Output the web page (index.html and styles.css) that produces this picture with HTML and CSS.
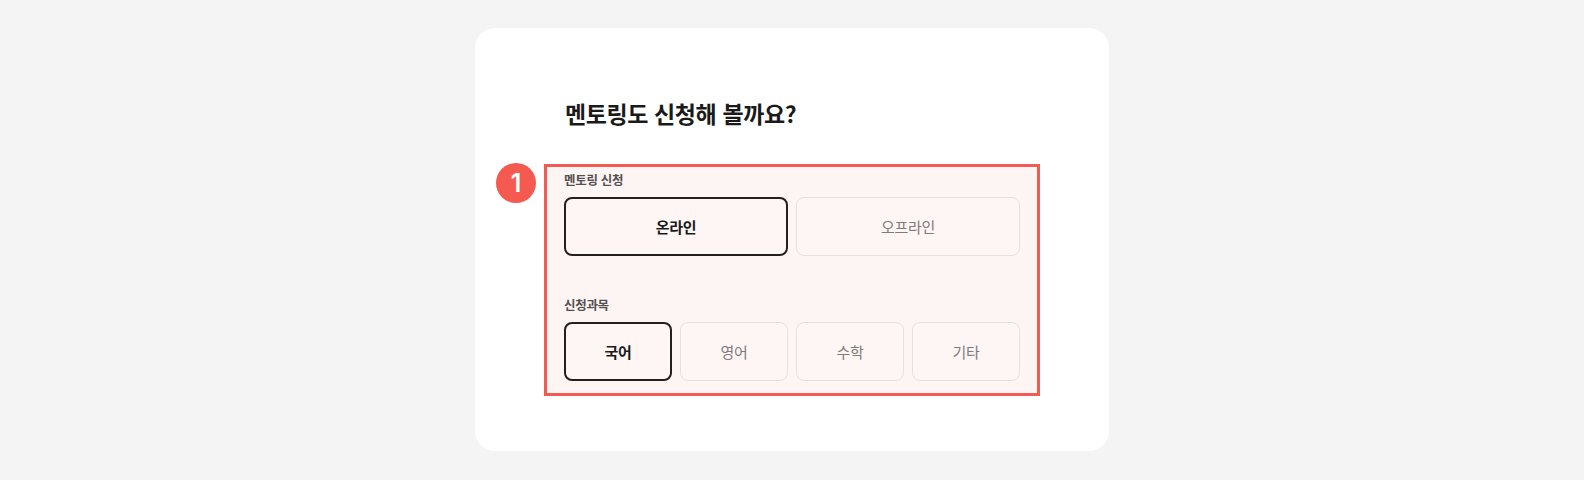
FILE: index.html
```html
<!DOCTYPE html>
<html lang="ko">
<head>
<meta charset="utf-8">
<link rel="stylesheet" href="styles.css">
</head>
<body>
<div class="card">
  <h1 class="title">멘토링도 신청해 볼까요?</h1>
  <div class="annot">
    <span class="badge">1</span>
    <div class="field">
      <div class="label">멘토링 신청</div>
      <div class="row">
        <button class="opt selected">온라인</button>
        <button class="opt">오프라인</button>
      </div>
    </div>
    <div class="field field2">
      <div class="label">신청과목</div>
      <div class="row row4">
        <button class="opt selected">국어</button>
        <button class="opt">영어</button>
        <button class="opt">수학</button>
        <button class="opt">기타</button>
      </div>
    </div>
  </div>
</div>
</body>
</html>
```

FILE: styles.css
```css
* { box-sizing: border-box; }
html, body { margin: 0; padding: 0; }
body {
  background: #f4f4f4;
  font-family: "Noto Sans CJK KR", "Noto Sans", sans-serif;
  display: flex;
  justify-content: center;
  padding-top: 28px;
  height: 480px;
}
.card {
  width: 634px;
  height: 423px;
  background: #ffffff;
  border-radius: 20px;
  padding: 70px 69px 0 69px;
}
.title {
  margin: 0 0 35px 21px;
  font-size: 23px;
  line-height: 31px;
  font-weight: 700;
  color: #1a1a1a;
  letter-spacing: -0.4px;
}
.annot {
  position: relative;
  border: 3px solid #f25a52;
  background: #fdf5f4;
  padding: 4px 17px 12px 17px;
}
.badge {
  position: absolute;
  left: -51px;
  top: -4px;
  width: 40px;
  height: 40px;
  border-radius: 50%;
  background: #f55a51;
  color: #fff;
  font-family: "Inter", "Noto Sans", sans-serif;
  font-weight: 600;
  font-size: 25px;
  line-height: 40px;
  text-align: center;
}
.label {
  font-size: 12.5px;
  line-height: 18px;
  font-weight: 700;
  color: #555050;
  margin-bottom: 8px;
  letter-spacing: -0.3px;
}
.field2 { margin-top: 40px; }
.row {
  display: grid;
  grid-template-columns: 1fr 1fr;
  gap: 8px;
}
.row4 { grid-template-columns: repeat(4, 1fr); }
.opt {
  height: 59px;
  border: 1px solid #e9dfde;
  border-radius: 8px;
  background: #fdf6f5;
  font-family: "Noto Sans CJK KR", "Noto Sans", sans-serif;
  font-size: 15px;
  color: #827a7a;
  font-weight: 400;
  letter-spacing: -0.3px;
  padding: 0;
}
.opt.selected {
  border: 2px solid #231f1f;
  color: #1a1a1a;
  font-weight: 700;
}
```
